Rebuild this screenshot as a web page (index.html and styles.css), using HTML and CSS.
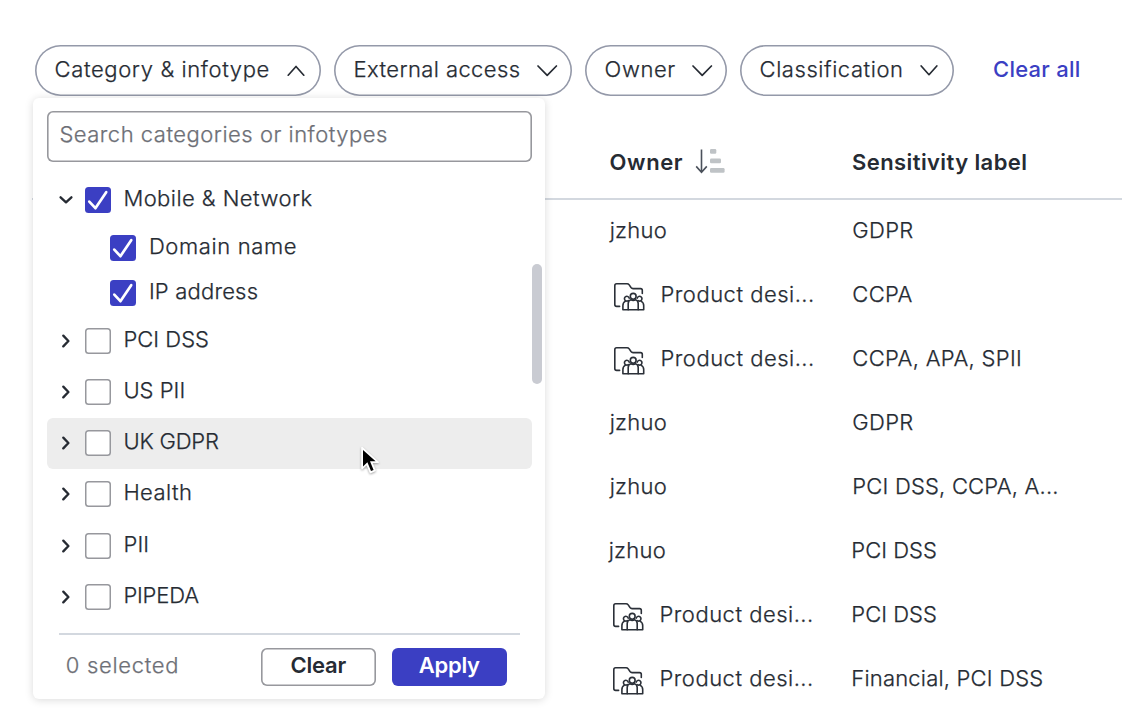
FILE: index.html
```html
<!DOCTYPE html>
<html lang="en">
<head>
<meta charset="utf-8">
<title>Category filter</title>
<link rel="stylesheet" href="styles.css">
</head>
<body>
<svg class="defs" width="0" height="0" aria-hidden="true">
  <symbol id="chev" viewBox="0 0 8 14"><path d="M1.3 1.6 6.4 7 1.3 12.4" fill="none" stroke="#262b33" stroke-width="2.3" stroke-linecap="round" stroke-linejoin="round"/></symbol>
  <symbol id="check" viewBox="0 0 26 26"><path d="M4.3 14.6 10.4 21.2 21.2 5.2" fill="none" stroke="#fff" stroke-width="2.7" stroke-linecap="round" stroke-linejoin="round"/></symbol>
  <symbol id="team" viewBox="0 0 34 32">
    <g fill="none" stroke="#2b3038" stroke-width="1.6" stroke-linecap="round" stroke-linejoin="round">
      <path d="M7.6 26.4H4.6Q2.8 26.4 2.8 24.6V5.7Q2.8 3.8 4.6 3.8H15Q16.4 3.8 17.2 4.9L19 7.5Q19.8 8.6 21 8.6H28.6Q30.3 8.6 30.3 10.3V13.4"/>
      <circle cx="21.2" cy="16.3" r="2.9"/>
      <path d="M16.2 29.8V23.6Q16.2 20.6 18.9 19.8 21.2 21.2 23.5 19.8 26.2 20.6 26.2 23.6V29.8"/>
      <path d="M16.3 20.6A2.4 2.4 0 1 1 17.2 18.2M25.2 18.2A2.4 2.4 0 1 1 26.1 20.6"/>
      <path d="M13.2 21.4Q10.9 22.6 10.9 25.6V29.8H31.7V25.6Q31.7 22.6 29.2 21.4"/>
    </g>
  </symbol>
</svg>

<div class="filters">
  <button class="pill category">Category &amp; infotype
    <svg width="18" height="12" viewBox="0 0 18 12"><path d="M1.2 10.2 9 1.5 16.8 10.2"/></svg></button>
  <button class="pill external">External access
    <svg width="21" height="12" viewBox="0 0 21 12"><path d="M1 1 10.2 10.4 19.4 1"/></svg></button>
  <button class="pill owner">Owner
    <svg width="21" height="12" viewBox="0 0 21 12"><path d="M1 1 10.2 10.4 19.4 1"/></svg></button>
  <button class="pill classification">Classification
    <svg width="18" height="12" viewBox="0 0 18 12"><path d="M1.2 1 9 9.7 16.8 1"/></svg></button>
  <a class="clear-all">Clear all</a>
</div>

<div class="table">
  <div class="thead">
    <div class="th th-owner">Owner
      <svg width="30" height="26" viewBox="0 0 30 26">
        <path d="M6.5 .4V23M1.2 17.4 6.5 23.2 11.8 17.4" fill="none" stroke="#4b515b" stroke-width="1.6"/>
        <g fill="#bfc3c6"><rect x="15" y="0" width="6.3" height="4.7" rx="1.3"/><rect x="15" y="9.6" width="11" height="4.7" rx="1.3"/><rect x="15" y="19" width="14.6" height="4.7" rx="1.3"/></g>
      </svg></div>
    <div class="th th-label">Sensitivity label</div>
  </div>
  <div class="tbody">
    <div class="tr"><div class="user">jzhuo</div><div class="s35">GDPR</div></div>
    <div class="tr"><div class="team"><svg width="34" height="32"><use href="#team"/></svg>Product desi...</div><div class="s35">CCPA</div></div>
    <div class="tr"><div class="team"><svg width="34" height="32"><use href="#team"/></svg>Product desi...</div><div class="s35">CCPA, APA, SPII</div></div>
    <div class="tr"><div class="user">jzhuo</div><div class="s35">GDPR</div></div>
    <div class="tr"><div class="user">jzhuo</div><div class="s20">PCI DSS, CCPA, A...</div></div>
    <div class="tr nudge"><div class="user">jzhuo</div><div class="s0">PCI DSS</div></div>
    <div class="tr nudge"><div class="team"><svg width="34" height="32"><use href="#team"/></svg>Product desi...</div><div class="s0">PCI DSS</div></div>
    <div class="tr nudge"><div class="team"><svg width="34" height="32"><use href="#team"/></svg>Product desi...</div><div class="s20">Financial, PCI DSS</div></div>
  </div>
</div>

<div class="panel">
  <div class="search">Search categories or infotypes</div>
  <div class="list">
    <div class="item"><svg class="chev open" width="8" height="14"><use href="#chev"/></svg><span class="box on"><svg width="26" height="26"><use href="#check"/></svg></span><span class="name s45">Mobile &amp; Network</span></div>
    <div class="item sub"><span class="box on"><svg width="26" height="26"><use href="#check"/></svg></span><span class="name s60">Domain name</span></div>
    <div class="item sub"><span class="box on"><svg width="26" height="26"><use href="#check"/></svg></span><span class="name s20">IP address</span></div>
    <div class="item"><svg class="chev" width="8" height="14"><use href="#chev"/></svg><span class="box"></span><span class="name s0">PCI DSS</span></div>
    <div class="item"><svg class="chev" width="8" height="14"><use href="#chev"/></svg><span class="box"></span><span class="name s0">US PII</span></div>
    <div class="item hover"><svg class="chev" width="8" height="14"><use href="#chev"/></svg><span class="box"></span><span class="name tight">UK GDPR</span></div>
    <div class="item"><svg class="chev" width="8" height="14"><use href="#chev"/></svg><span class="box"></span><span class="name s45">Health</span></div>
    <div class="item"><svg class="chev" width="8" height="14"><use href="#chev"/></svg><span class="box"></span><span class="name s20">PII</span></div>
    <div class="item"><svg class="chev" width="8" height="14"><use href="#chev"/></svg><span class="box"></span><span class="name tight">PIPEDA</span></div>
  </div>
  <div class="footer">
    <span class="count">0 selected</span>
    <button class="btn clear"><span>Clear</span></button>
    <button class="btn apply"><span>Apply</span></button>
  </div>
  <div class="thumb"></div>
</div>

<svg class="cursor" width="24" height="34" viewBox="0 0 24 34">
  <path d="M3 2.5V23.6L7.9 19 11.4 27.4 16 25.4 12.5 17.3H19.2Z" fill="#fff" stroke="#fff" stroke-width="1.6" stroke-linejoin="round"/>
  <path d="M4 5V21.4L8.4 17.3 12 26 14.6 24.9 11 16.2H16.6Z" fill="#000"/>
</svg>
</body>
</html>
```
FILE: styles.css
```css
* { box-sizing: border-box; }
body {
  margin: 0;
  width: 1122px;
  height: 712px;
  overflow: hidden;
  position: relative;
  background: #fff;
  color: #262b33;
  font-family: Inter, "Liberation Sans", sans-serif;
  font-size: 22px;
  font-weight: 300;
  line-height: 26px;
  white-space: nowrap;
  -webkit-text-stroke: 0.25px currentColor;
}
button { font: inherit; color: inherit; border: 0; background: #fff; margin: 0; }
svg { flex: none; display: block; }
.defs { position: absolute; }

.filters { display: flex; gap: 13px; padding: 45px 0 0 35px; }
.pill {
  display: flex;
  justify-content: space-between;
  align-items: center;
  height: 51px;
  padding: 0 16px 3px 19.6px;
  border-radius: 26px;
  box-shadow: inset 0 0 0 1.6px #9499a9;
}
.pill svg { fill: none; stroke: #262b33; stroke-width: 1.7; stroke-linecap: round; stroke-linejoin: round; position: relative; top: 2px; }
.category { width: 286px; letter-spacing: .62px; }
.external { width: 238px; letter-spacing: .4px; padding-right: 14.5px; }
.owner { width: 142px; letter-spacing: .6px; padding-right: 14.5px; }
.classification { width: 214px; letter-spacing: .56px; }
.clear-all { margin: 11px 0 0 26px; color: #3b3fc3; font-weight: 500; letter-spacing: .25px; -webkit-text-stroke: 0; }

.table { margin-left: 32px; }
.thead { display: flex; height: 104px; border-bottom: 2px solid #d3d8df; padding: 53px 0 0 577.6px; }
.th { font-weight: 600; -webkit-text-stroke: 0; }
.th-owner { width: 242.5px; display: flex; gap: 11.6px; letter-spacing: .6px; }
.th-label { letter-spacing: .4px; }
.tbody { margin-top: -2px; padding-left: 577px; }
.tr { display: grid; grid-template-columns: 243.3px 1fr; align-items: center; height: 64px; padding-bottom: 1px; }
.nudge { margin-left: -1px; }
.user { padding-left: .7px; letter-spacing: .25px; }
.team { display: flex; gap: 14.5px; padding-left: 3px; letter-spacing: .5px; height: 26px; }
.team svg { margin-top: -1px; }

.tight { letter-spacing: -.17px; }
.s0 { letter-spacing: .03px; }
.s20 { letter-spacing: .2px; }
.s35 { letter-spacing: .33px; }
.s45 { letter-spacing: .45px; }
.s60 { letter-spacing: .62px; }

.panel {
  position: absolute;
  left: 33.4px;
  top: 98px;
  width: 512px;
  height: 601px;
  padding: 12.7px 13.2px 13px 13.2px;
  background: #fff;
  border-radius: 6px;
  box-shadow: 0 1px 8px rgba(0, 0, 0, .15);
}
.search {
  height: 51px;
  padding: 10.5px 12.8px;
  border-radius: 6px;
  box-shadow: inset 0 0 0 1.6px #97989d;
  color: #6d6f76;
  letter-spacing: .5px;
}
.list { margin-top: 12.3px; height: 459px; }
.item { display: flex; align-items: center; height: 51.2px; padding-left: 15px; border-radius: 6px; }
.sub { height: 45px; padding-left: 63.5px; }
.hover { background: #ededed; }
.chev { margin-right: 15px; }
.open { transform: rotate(90deg); }
.box { flex: none; width: 26px; height: 26px; border-radius: 3.5px; background: #fff; box-shadow: inset 0 0 0 1.5px #97989d; }
.on { background: #3b3fc3; box-shadow: none; }
.name { margin: -4px 0 0 12.8px; }
.footer { display: flex; align-items: center; height: 65px; margin: 0 12.6px 0 12px; padding: 1px 12.6px 0 7.2px; border-top: 2px solid #d3d8df; }
.count { flex: 1; color: #6d6f76; letter-spacing: .7px; margin-top: -4px; }
.btn { width: 115.5px; height: 38px; padding: 0 0 4px; border-radius: 6px; font-weight: 600; letter-spacing: -.25px; -webkit-text-stroke: 0; }
.clear { box-shadow: inset 0 0 0 1.6px #97989d; margin-right: 15.5px; }
.apply { background: #3b3fc3; color: #fff; }
.thumb { position: absolute; left: 499px; top: 166px; width: 10px; height: 120px; border-radius: 5px; background: #c9cbd2; }
.cursor { position: absolute; left: 359px; top: 445px; filter: drop-shadow(0 1.5px 1px rgba(0, 0, 0, .35)); }
```
